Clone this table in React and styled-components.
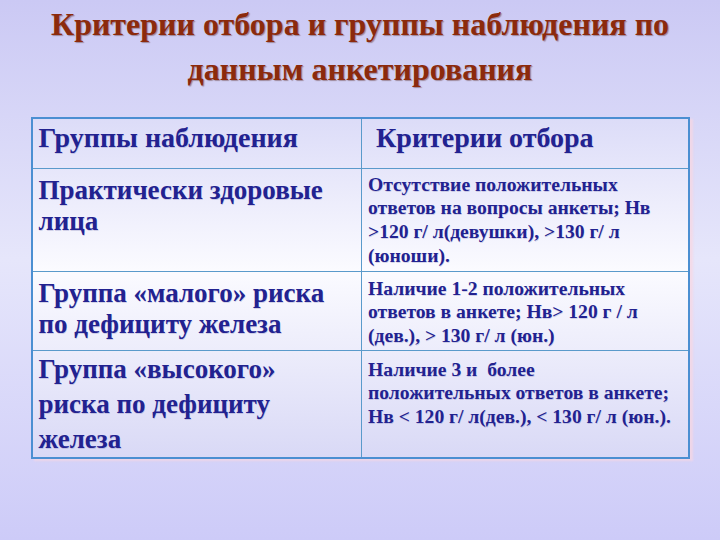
import React from "react";
import styled, { createGlobalStyle } from "styled-components";

const Global = createGlobalStyle`
  html, body { margin: 0; padding: 0; }
  body {
    width: 720px;
    height: 540px;
    overflow: hidden;
    font-family: "Liberation Serif", "Times New Roman", serif;
  }
`;

const Slide = styled.div`
  width: 720px;
  height: 540px;
  box-sizing: border-box;
  background: linear-gradient(180deg, #cbc9f4 0%, #e6e6fb 48%, #cdcbf8 100%);
  display: flex;
  flex-direction: column;
  align-items: center;
  padding-top: 2px;
`;

const Title = styled.h1`
  margin: 0;
  font-family: "Liberation Serif", "Times New Roman", serif;
  font-weight: bold;
  font-size: 32px;
  line-height: 45px;
  color: #8c2a0c;
  text-align: center;
  text-shadow: 1px 1px 1px rgba(80, 30, 20, 0.4);
`;

const Table = styled.table`
  margin-top: 25px;
  width: 659px;
  border-collapse: collapse;
  border: 2px solid #4b8fd2;
  background: linear-gradient(180deg, #dcdcf8 0%, #fbfbff 45%, #d9d9f6 100%);
  box-shadow: 3px 2px 2px rgba(250, 215, 225, 0.7);
`;

const Row = styled.tr`
  height: ${(p) => p.$h}px;
`;

const Cell = styled.td`
  border: 1px solid #5a9acb;
  vertical-align: top;
  box-sizing: border-box;
  padding: ${(p) => p.$pt}px ${(p) => (p.$small ? 2 : 14)}px 0 6px;
  width: ${(p) => (p.$left ? "330px" : "auto")};
  font-family: "Liberation Serif", "Times New Roman", serif;
  font-weight: bold;
  color: #222290;
  font-size: ${(p) => (p.$small ? "19.6px" : "27px")};
  line-height: ${(p) => p.$lh}px;
  text-shadow: 0.5px 0.5px 0 rgba(60, 60, 140, 0.2);
`;

const HeadCell = styled(Cell)`
  padding: 2px 4px 0 ${(p) => (p.$indent ? "14px" : "6px")};
  font-size: 28px;
  line-height: 34px;
`;

export default function App() {
  return (
    <>
      <Global />
      <Slide>
        <Title>
          Критерии отбора и группы наблюдения по
          <br />
          данным анкетирования
        </Title>
        <Table>
          <tbody>
            <Row $h={50}>
              <HeadCell $left>Группы наблюдения</HeadCell>
              <HeadCell $indent>Критерии отбора</HeadCell>
            </Row>
            <Row $h={103}>
              <Cell $left $pt={6} $lh={31}>Практически здоровые лица</Cell>
              <Cell $small $pt={4} $lh={23.8}>
                Отсутствие положительных
                <br />
                ответов на вопросы анкеты; Нв
                <br />
                &gt;120 г/ л(девушки), &gt;130 г/ л
                <br />
                (юноши).
              </Cell>
            </Row>
            <Row $h={79}>
              <Cell $left $pt={6} $lh={31}>Группа «малого» риска по дефициту железа</Cell>
              <Cell $small $pt={5} $lh={23.5}>
                Наличие 1-2 положительных
                <br />
                ответов в анкете; Нв&gt; 120 г / л
                <br />
                (дев.), &gt; 130 г/ л (юн.)
              </Cell>
            </Row>
            <Row $h={107}>
              <Cell $left $pt={1} $lh={35}>Группа «высокого» риска по дефициту железа</Cell>
              <Cell $small $pt={7} $lh={23.5}>
                Наличие 3 и&nbsp; более
                <br />
                положительных ответов в анкете;
                <br />
                Нв &lt; 120 г/ л(дев.), &lt; 130 г/ л (юн.).
              </Cell>
            </Row>
          </tbody>
        </Table>
      </Slide>
    </>
  );
}
